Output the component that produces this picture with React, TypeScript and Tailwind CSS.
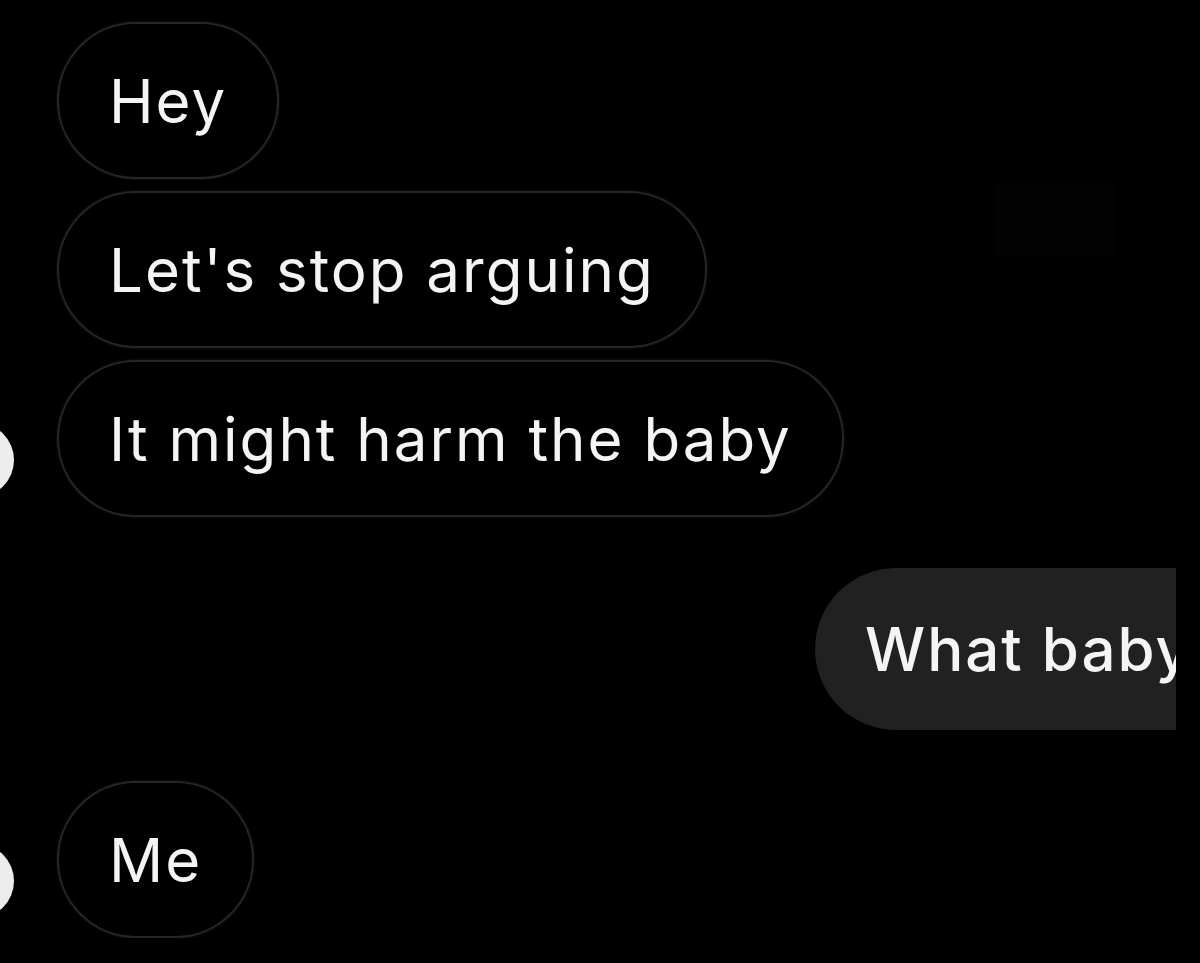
import type { ReactNode } from 'react';

type Msg = { id: number; text: string; mine?: boolean; avatar?: boolean };

const MESSAGES: Msg[] = [
  { id: 1, text: 'Hey' },
  { id: 2, text: "Let's stop arguing" },
  { id: 3, text: 'It might harm the baby', avatar: true },
  { id: 4, text: 'What baby', mine: true },
  { id: 5, text: 'Me', avatar: true },
];

function Avatar({ show }: { show?: boolean }) {
  return (
    <div
      className={`shrink-0 w-[74px] h-[74px] rounded-full -ml-[60px] self-end mb-[20px] ${
        show ? 'bg-[#ececec]' : 'bg-transparent'
      }`}
    />
  );
}

function Bubble({ mine, children }: { mine?: boolean; children: ReactNode }) {
  if (mine) {
    return (
      <div className="h-[162px] flex items-center pl-[50px] pr-[40px] rounded-l-full bg-[#212121] -mr-[56px] whitespace-nowrap">
        <span className="text-[60px] text-[#f4f4f4] font-medium tracking-[2px]">{children}</span>
      </div>
    );
  }
  return (
    <div className="h-[157px] flex items-center px-[50px] rounded-full border-2 border-[#262626] shadow-[0_0_3px_#1c1c1c] whitespace-nowrap">
      <span className="text-[60px] text-[#f4f4f4] tracking-[2px]">{children}</span>
    </div>
  );
}

export default function App() {
  return (
    <div
      className="w-[1200px] h-[963px] bg-black overflow-hidden relative"
      style={{ fontFamily: 'Inter, "Noto Sans", sans-serif' }}
    >
      {/* faint leftover block top right */}
      <div className="absolute left-[995px] top-[182px] w-[120px] h-[75px] rounded-md bg-[#030303]" />

      <div className="w-[1176px] overflow-hidden pt-[22px] pl-[57px] flex flex-col">
        {MESSAGES.map((m, i) => {
          const prev = MESSAGES[i - 1];
          const gap = !prev ? '' : prev.mine !== m.mine ? 'mt-[51px]' : 'mt-[12px]';
          if (m.mine) {
            return (
              <div key={m.id} className={`flex justify-end ${gap}`}>
                <Bubble mine>{m.text}</Bubble>
              </div>
            );
          }
          return (
            <div key={m.id} className={`flex items-center gap-[43px] -ml-[57px] ${gap}`}>
              <Avatar show={m.avatar} />
              <Bubble>{m.text}</Bubble>
            </div>
          );
        })}
      </div>
    </div>
  );
}
